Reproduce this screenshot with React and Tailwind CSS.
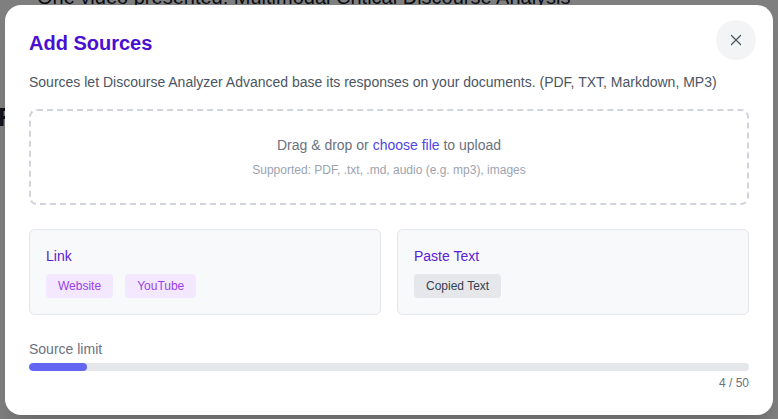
import { X } from 'lucide-react';

const font = { fontFamily: '"Liberation Sans", Arial, sans-serif' };

function SourceCard({ title, children }) {
  return (
    <div className="flex-1 rounded-md border border-gray-200 bg-[#f8f9fb] p-4">
      <p className="text-sm leading-5 text-[#5b21d6]">{title}</p>
      <div className="mt-2 flex gap-3">{children}</div>
    </div>
  );
}

function Chip({ children, tone }) {
  const cls =
    tone === 'purple'
      ? 'bg-[#f3e8ff] text-[#9a3fe6]'
      : 'bg-[#e5e7eb] text-[#374151]';
  return <span className={`rounded px-3 py-1 text-xs leading-4 ${cls}`}>{children}</span>;
}

export default function App() {
  const used = 4;
  const limit = 50;

  return (
    <div className="relative h-[419px] w-[778px] overflow-hidden bg-white" style={font}>
      {/* page behind the dialog */}
      <div className="pl-[37px]">
        <h2 className="-mt-[17px] text-[20px] leading-7 text-[#111827]">
          One video presented: Multimodal Critical Discourse Analysis
        </h2>
      </div>
      <p className="-ml-[2px] mt-[90px] text-[26px] font-bold leading-8 text-[#1e293b]">Findings</p>

      {/* overlay */}
      <div className="absolute inset-0 flex items-start justify-center bg-black/50 pt-[5px]">
        <div className="w-[768px] rounded-2xl bg-white p-6 shadow-xl">
          <div className="flex items-start justify-between">
            <h1 className="text-xl font-bold leading-7 text-[#4a0fd0]">Add Sources</h1>
            <button className="-mr-[7px] -mt-[9px] flex h-10 w-10 items-center justify-center rounded-full bg-[#f3f4f6] text-[#4b5563]">
              <X size={18} strokeWidth={1.75} />
            </button>
          </div>

          <p className="mt-3 text-sm leading-5 text-[#4b5563]">
            Sources let Discourse Analyzer Advanced base its responses on your documents. (PDF, TXT, Markdown, MP3)
          </p>

          <div className="mt-[17px] rounded-lg border-2 border-dashed border-[#d1d5db] pb-[25px] pt-6 text-center">
            <p className="text-sm leading-5 text-[#6b7280]">
              Drag &amp; drop or <span className="text-[#4f46e5]">choose file</span> to upload
            </p>
            <p className="mt-[7px] text-xs leading-4 text-[#9ca3af]">
              Supported: PDF, .txt, .md, audio (e.g. mp3), images
            </p>
          </div>

          <div className="mt-6 flex gap-4">
            <SourceCard title="Link">
              <Chip tone="purple">Website</Chip>
              <Chip tone="purple">YouTube</Chip>
            </SourceCard>
            <SourceCard title="Paste Text">
              <Chip>Copied Text</Chip>
            </SourceCard>
          </div>

          <p className="mt-6 text-sm leading-5 text-[#6b7280]">Source limit</p>
          <div className="mt-1 h-2 w-full overflow-hidden rounded-full bg-[#e5e7eb]">
            <div className="h-full rounded-full bg-[#6366f1]" style={{ width: `${(used / limit) * 100}%` }} />
          </div>
          <p className="mt-1 text-right text-xs leading-4 text-[#6b7280]">
            {used} / {limit}
          </p>
        </div>
      </div>
    </div>
  );
}
